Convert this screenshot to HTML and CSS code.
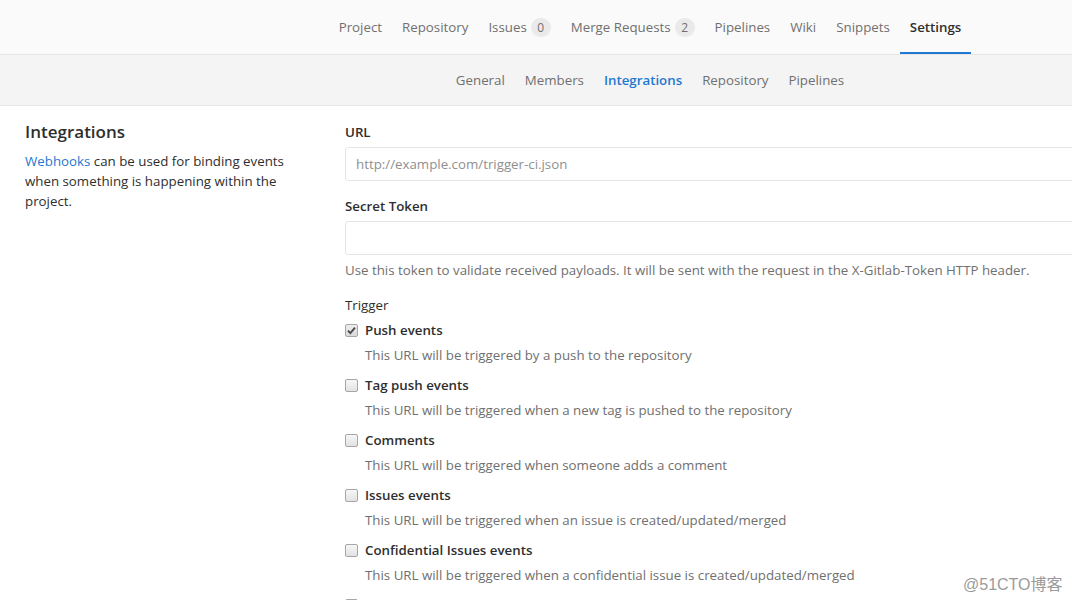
FILE: index.html
```html
<!DOCTYPE html>
<html>
<head>
<meta charset="utf-8">
<link rel="stylesheet" href="styles.css">
</head>
<body>
<header class="topnav">
  <nav class="nav-links">
    <a class="nav-item">Project</a>
    <a class="nav-item">Repository</a>
    <a class="nav-item">Issues <span class="badge">0</span></a>
    <a class="nav-item">Merge Requests <span class="badge">2</span></a>
    <a class="nav-item">Pipelines</a>
    <a class="nav-item">Wiki</a>
    <a class="nav-item">Snippets</a>
    <a class="nav-item active">Settings</a>
  </nav>
</header>
<div class="subnav">
  <nav class="sub-links">
    <a class="sub-item">General</a>
    <a class="sub-item">Members</a>
    <a class="sub-item active">Integrations</a>
    <a class="sub-item">Repository</a>
    <a class="sub-item">Pipelines</a>
  </nav>
</div>
<main class="content">
  <aside class="side">
    <h4 class="side-title">Integrations</h4>
    <p class="side-desc"><a class="link">Webhooks</a> can be used for binding events when something is happening within the project.</p>
  </aside>
  <section class="form">
    <div class="group">
      <label class="label">URL</label>
      <div class="input placeholder">http://example.com/trigger-ci.json</div>
    </div>
    <div class="group">
      <label class="label">Secret Token</label>
      <div class="input"></div>
      <p class="help">Use this token to validate received payloads. It will be sent with the request in the X-Gitlab-Token HTTP header.</p>
    </div>
    <div class="group">
      <label class="label plain">Trigger</label>
      <div class="trigger">
        <div class="check-row"><span class="box checked"><svg width="9" height="9" viewBox="0 0 9 9"><path d="M1 4.6 L3.4 7.1 L8 1.6" fill="none" stroke="#4a4a4a" stroke-width="1.9"/></svg></span><span class="check-label">Push events</span></div>
        <p class="check-desc">This URL will be triggered by a push to the repository</p>
      </div>
      <div class="trigger">
        <div class="check-row"><span class="box"></span><span class="check-label">Tag push events</span></div>
        <p class="check-desc">This URL will be triggered when a new tag is pushed to the repository</p>
      </div>
      <div class="trigger">
        <div class="check-row"><span class="box"></span><span class="check-label">Comments</span></div>
        <p class="check-desc">This URL will be triggered when someone adds a comment</p>
      </div>
      <div class="trigger">
        <div class="check-row"><span class="box"></span><span class="check-label">Issues events</span></div>
        <p class="check-desc">This URL will be triggered when an issue is created/updated/merged</p>
      </div>
      <div class="trigger">
        <div class="check-row"><span class="box"></span><span class="check-label">Confidential Issues events</span></div>
        <p class="check-desc">This URL will be triggered when a confidential issue is created/updated/merged</p>
      </div>
      <div class="trigger">
        <div class="check-row"><span class="box"></span></div>
      </div>
    </div>
  </section>
</main>
<div class="watermark">@51CTO博客</div>
</body>
</html>
```
FILE: styles.css
```css
* { box-sizing: border-box; }
html, body { margin: 0; padding: 0; }
body {
  width: 1072px;
  height: 600px;
  overflow: hidden;
  position: relative;
  background: #fff;
  font-family: "Open Sans", "Noto Sans", sans-serif;
  font-size: 13.3px;
  color: #2e2e2e;
}
a { text-decoration: none; color: inherit; }

.topnav {
  height: 55px;
  background: #fafafa;
  border-bottom: 1px solid #e5e5e5;
}
.nav-links {
  display: flex;
  justify-content: center;
  padding-left: 228px;
  height: 54px;
}
.nav-item {
  display: flex;
  align-items: center;
  padding: 0 10px;
  color: #707070;
  font-size: 13.3px;
  border-bottom: 2px solid transparent;
  padding-top: 2px;
}
.nav-item.active {
  color: #2e2e2e;
  font-weight: 600;
  border-bottom-color: #1f78d1;
}
.badge {
  display: inline-block;
  margin-left: 4px;
  background: #eaeaea;
  color: #707070;
  border-radius: 10px;
  min-width: 20px;
  height: 19px;
  line-height: 19px;
  text-align: center;
  font-size: 12px;
  padding: 0 5px;
}

.subnav {
  height: 51px;
  background: #f4f4f4;
  border-bottom: 1px solid #e5e5e5;
}
.sub-links {
  display: flex;
  justify-content: center;
  padding-left: 228px;
  height: 50px;
}
.sub-item {
  display: flex;
  align-items: center;
  padding: 0 10px;
  color: #707070;
  font-size: 13.3px;
}
.sub-item.active {
  color: #1f78d1;
  font-weight: 600;
}

.content {
  display: flex;
  padding-top: 16px;
}
.side {
  width: 345px;
  padding-left: 25px;
  padding-right: 50px;
}
.side-title {
  margin: 0 0 9px;
  font-size: 17px;
  font-weight: 600;
  line-height: 20px;
  color: #2e2e2e;
}
.side-desc {
  margin: 0;
  line-height: 20px;
  width: 268px;
}
.link { color: #1f78d1; }

.form {
  flex: 1;
  min-width: 0;
}
.group { margin-bottom: 15px; }
.label {
  display: block;
  line-height: 20px;
  font-weight: 600;
  margin-bottom: 5px;
}
.label.plain { font-weight: 400; }
.input {
  width: 760px;
  height: 34px;
  border: 1px solid #e5e5e5;
  border-radius: 3px;
  padding: 0 10px;
  line-height: 32px;
  background: #fff;
}
.input.placeholder { color: #909090; }
.help {
  margin: 5px 0 0;
  line-height: 20px;
  color: #707070;
}
.trigger { margin-bottom: 10px; }
.check-row {
  display: flex;
  align-items: center;
  height: 20px;
}
.box {
  width: 13px;
  height: 13px;
  border: 1px solid #a6a6a6;
  border-radius: 2px;
  background: linear-gradient(#f7f7f7, #e2e2e2);
  margin-right: 7px;
  display: flex;
  align-items: center;
  justify-content: center;
}
.box.checked { background: linear-gradient(#eeeeee, #d9d9d9); }
.check-label { font-weight: 600; }
.check-desc {
  margin: 5px 0 0 20px;
  line-height: 20px;
  color: #707070;
}

.watermark {
  position: absolute;
  left: 963px;
  top: 571px;
  font-family: "Liberation Sans", "Noto Sans CJK SC", sans-serif;
  font-size: 16px;
  color: #9a9a9a;
}
```
